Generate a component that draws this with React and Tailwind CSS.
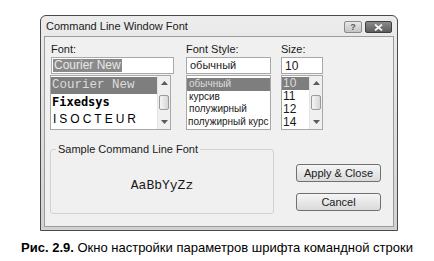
import React from "react";

const Arrow = ({ up }) => (
  <svg width="7" height="4" viewBox="0 0 7 4">
    <path d={up ? "M0 4 L3.5 0 L7 4Z" : "M0 0 L3.5 4 L7 0Z"} fill="#5a5a5a" />
  </svg>
);

function Scrollbar() {
  return (
    <div className="w-[13px] flex flex-col bg-[#f0f0f0] border-l border-[#e2e2e2]">
      <div className="h-[14px] flex items-center justify-center">
        <Arrow up />
      </div>
      <div className="flex-1 flex flex-col justify-center px-[1px]">
        <div className="h-[15px] rounded-[2px] border border-[#9a9a9a] bg-gradient-to-r from-[#f6f6f6] to-[#d6d6d6]" />
      </div>
      <div className="h-[14px] flex items-center justify-center">
        <Arrow />
      </div>
    </div>
  );
}

const sans = { fontFamily: '"Liberation Sans", Arial, sans-serif' };

export default function App() {
  return (
    <div className="w-[434px] h-[261px] bg-white overflow-hidden" style={sans}>
      <div className="pt-[15px] pl-[40px]">
        {/* Window */}
        <div className="w-[358px] h-[216px] border border-[#4a4a4a] rounded-t-[6px] bg-gradient-to-b from-[#ececec] to-[#d2d2d2] px-[3px] pb-[3px] flex flex-col">
          {/* Title bar */}
          <div className="h-[20px] flex items-center justify-between">
            <span className="text-[11px] text-[#1a1a1a] pl-[2px] pt-[1px]">
              Command Line Window Font
            </span>
            <div className="flex gap-[3px] mr-[2px] mt-[2px]">
              <div className="w-[18px] h-[12px] rounded-[2px] border border-[#8a8a8a] bg-gradient-to-b from-[#e8e8e8] to-[#c4c4c4] flex items-center justify-center text-[9px] font-bold text-[#5a5a5a] leading-none">
                ?
              </div>
              <div className="w-[27px] h-[12px] rounded-[2px] border border-[#3e3e3e] bg-gradient-to-b from-[#8c8c8c] to-[#5c5c5c] flex items-center justify-center">
                <svg width="9" height="7" viewBox="0 0 9 7">
                  <path d="M1 0.5 L8 6.5 M8 0.5 L1 6.5" stroke="#f4f4f4" strokeWidth="1.8" />
                </svg>
              </div>
            </div>
          </div>
          {/* Content */}
          <div className="flex-1 border border-[#9c9c9c] bg-[#f0f0f0] flex flex-col">
            {/* Top section */}
            <div className="flex pl-[6px] pt-[5px] text-[11px] text-[#1a1a1a]">
              {/* Font column */}
              <div className="w-[123px] flex flex-col">
                <div className="h-[14px] leading-[14px]">Font:</div>
                <div className="mt-[1px] h-[17px] border border-[#a8a8a8] bg-white flex items-center px-[1px]">
                  <span className="bg-[#8a8a8a] text-[#e8e8e8] px-[1px] leading-[13px] text-[12px]">Courier New</span>
                </div>
                <div className="mt-[1px] h-[55px] w-[121px] -ml-[1px] border border-[#a8a8a8] bg-white flex">
                  <div className="flex-1 flex flex-col pt-[1px]">
                    <div
                      className="h-[17px] leading-[17px] bg-[#7e7e7e] text-[#dcdcdc] px-[1px] text-[12.5px]"
                      style={{ fontFamily: '"Liberation Mono", "Courier New", monospace' }}
                    >
                      Courier New
                    </div>
                    <div
                      className="h-[17px] leading-[17px] px-[1px] text-[12px] font-bold text-black"
                      style={{ fontFamily: '"DejaVu Sans Mono", monospace' }}
                    >
                      Fixedsys
                    </div>
                    <div className="h-[17px] leading-[17px] px-[2px] text-[12px] tracking-[3px] text-black">
                      ISOCTEUR
                    </div>
                  </div>
                  <Scrollbar />
                </div>
              </div>
              {/* Font style column */}
              <div className="w-[85px] ml-[12px] flex flex-col">
                <div className="h-[14px] leading-[14px]">Font Style:</div>
                <div className="mt-[1px] h-[17px] border border-[#a8a8a8] bg-white flex items-center px-[3px]">
                  обычный
                </div>
                <div className="mt-[1px] h-[55px] border border-[#a8a8a8] bg-white flex flex-col pt-[2px] whitespace-nowrap text-[10px]">
                  <div className="h-[12.5px] leading-[12.5px] bg-[#7e7e7e] text-[#dcdcdc] px-[2px]">обычный</div>
                  <div className="h-[12.5px] leading-[12.5px] px-[2px]">курсив</div>
                  <div className="h-[12.5px] leading-[12.5px] px-[2px]">полужирный</div>
                  <div className="h-[12.5px] leading-[12.5px] px-[1px]">полужирный курс</div>
                </div>
              </div>
              {/* Size column */}
              <div className="w-[42px] ml-[10px] flex flex-col">
                <div className="h-[14px] leading-[14px]">Size:</div>
                <div className="mt-[1px] h-[17px] border border-[#a8a8a8] bg-white flex items-center px-[3px] text-[12px]">
                  10
                </div>
                <div className="mt-[1px] h-[55px] border border-[#a8a8a8] bg-white flex">
                  <div className="flex-1 flex flex-col pt-[1px] text-[12px]">
                    <div className="h-[13px] leading-[13px] bg-[#7e7e7e] text-[#dcdcdc] px-[1px]">10</div>
                    <div className="h-[13px] leading-[13px] px-[1px]">11</div>
                    <div className="h-[13px] leading-[13px] px-[1px]">12</div>
                    <div className="h-[13px] leading-[13px] px-[1px]">14</div>
                  </div>
                  <Scrollbar />
                </div>
              </div>
            </div>
            {/* Bottom section */}
            <div className="flex pl-[5px] mt-[13px]">
              <fieldset className="w-[224px] h-[71px] border border-[#d2d2d2] rounded-[3px] flex items-center justify-center">
                <legend className="ml-[5px] px-[2px] text-[11px] text-[#1a1a1a] leading-[13px]">
                  Sample Command Line Font
                </legend>
                <span
                  className="text-[13px] text-[#1a1a1a] mt-[3px]"
                  style={{ fontFamily: '"Liberation Mono", "Courier New", monospace' }}
                >
                  AaBbYyZz
                </span>
              </fieldset>
              <div className="ml-[22px] pt-[21px] flex flex-col gap-[11px]">
                <div className="w-[85px] h-[18px] rounded-[3px] border border-[#707070] bg-gradient-to-b from-[#f6f6f6] to-[#dadada] flex items-center justify-center text-[11px] text-[#1a1a1a]">
                  Apply &amp; Close
                </div>
                <div className="w-[85px] h-[18px] rounded-[3px] border border-[#707070] bg-gradient-to-b from-[#f6f6f6] to-[#dadada] flex items-center justify-center text-[11px] text-[#1a1a1a]">
                  Cancel
                </div>
              </div>
            </div>
          </div>
        </div>
      </div>
      {/* Caption */}
      <div className="mt-[9px] text-center text-[13px] text-black leading-[15px]">
        <span className="font-bold">Рис. 2.9.</span> Окно настройки параметров шрифта командной строки
      </div>
    </div>
  );
}
